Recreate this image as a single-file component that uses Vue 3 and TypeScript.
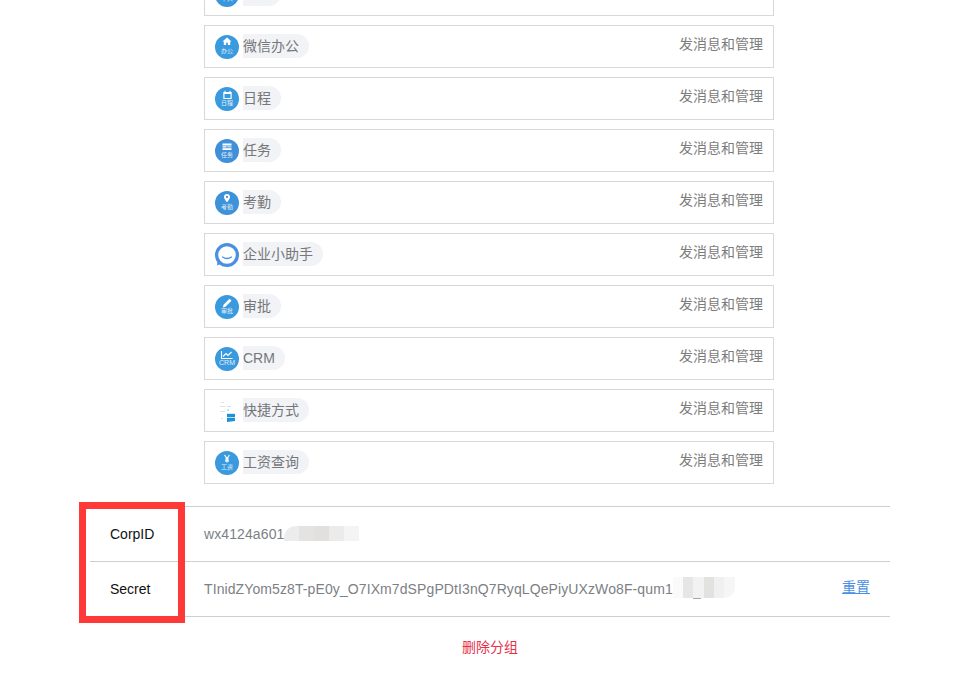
<script setup lang="ts">
interface Row { name: string; perm: string; icon: string; label: string; color: string; width: number }
const PERM = '发消息和管理'
const rows: Row[] = [
  { name: '', perm: '', icon: 'doc', label: '个人', color: '#3a96dc', width: 38 },
  { name: '微信办公', perm: PERM, icon: 'home', label: '办公', color: '#3a9ade', width: 66 },
  { name: '日程', perm: PERM, icon: 'cal', label: '日程', color: '#3a9ade', width: 38 },
  { name: '任务', perm: PERM, icon: 'task', label: '任务', color: '#4090d8', width: 38 },
  { name: '考勤', perm: PERM, icon: 'pin', label: '考勤', color: '#3d92d8', width: 38 },
  { name: '企业小助手', perm: PERM, icon: 'chat', label: '', color: '#4a90e2', width: 80 },
  { name: '审批', perm: PERM, icon: 'pen', label: '审批', color: '#3a9ade', width: 38 },
  { name: 'CRM', perm: PERM, icon: 'crm', label: 'CRM', color: '#3a9ade', width: 42 },
  { name: '快捷方式', perm: PERM, icon: 'shortcut', label: '', color: '', width: 66 },
  { name: '工资查询', perm: PERM, icon: 'yen', label: '工资', color: '#3a9ade', width: 66 },
]
const corpPatches = ['#ececec', '#e4e3e2', '#e1e0df', '#ebebeb', '#f4f4f4']
const secretPatches = ['#fafafa', '#e6e6e6', '#f2f2f2', '#e2e2e1', '#f0f0f0', '#f6f6f6']
</script>

<template>
  <div class="page">
    <div class="list">
      <div v-for="row in rows" :key="row.icon" class="row">
        <div class="app">
          <svg class="icon" viewBox="0 0 24 24" width="24" height="24">
            <template v-if="row.icon === 'chat'">
              <circle cx="12" cy="12" r="10.4" fill="#fff" stroke="#4a90e2" stroke-width="3.2" />
              <path d="M2.500 18l-.5 4.500 5-2z" fill="#4a90e2" />
              <path d="M7.500 14q4.500 3 9 0" fill="none" stroke="#4a90e2" stroke-width="1.300" stroke-linecap="round" />
            </template>
            <template v-else-if="row.icon === 'shortcut'">
              <g fill="#dfe3e6">
                <rect x="6" y="3" width="3" height="1" />
                <rect x="5" y="7" width="5" height="1" />
                <rect x="5" y="12" width="5" height="1" />
                <rect x="6" y="19" width="2" height="1" />
              </g>
              <g fill="#c2e2f5">
                <rect x="12" y="7" width="4" height="1" />
                <rect x="12" y="10" width="2" height="2" />
              </g>
              <path d="M12 14.800h8v3.500h-8z" fill="#1d93d6" />
              <path d="M12 19h8v3l-8 1z" fill="#1d93d6" />
            </template>
            <template v-else>
              <circle cx="12" cy="12" r="12" :fill="row.color" />
              <path v-if="row.icon === 'home'" d="M12 2.500l4.500 3.900h-1.300v3.600h-2.300V7.800h-1.800V10H8.800V6.400H7.500z" fill="#fff" />
              <path v-else-if="row.icon === 'cal'" fill-rule="evenodd" d="M8.500 5h1V3.800h1V5h4V3.800h1V5h1.200v7H8.300V5zM9.500 7v4h6V7z" fill="#fff" />
              <g v-else-if="row.icon === 'task'" fill="#fff">
                <rect x="7.500" y="4.500" width="9" height="2" />
                <rect x="7.500" y="7.200" width="4" height="1.300" />
                <rect x="12.300" y="7.200" width="4.200" height="1.300" opacity=".7" />
                <rect x="7.500" y="9.200" width="9" height="1.800" />
              </g>
              <path v-else-if="row.icon === 'pin'" fill-rule="evenodd" d="M12 3c-1.800 0-3 1.300-3 2.900 0 1.900 3 5.400 3 5.400s3-3.500 3-5.400C15 4.300 13.800 3 12 3zm0 1.800a1.100 1.100 0 110 2.200 1.100 1.100 0 010-2.200z" fill="#fff" />
              <path v-else-if="row.icon === 'pen'" d="M14.500 3.800l2 2-6 6-2.700.7.700-2.700z" fill="#fff" />
              <path v-else-if="row.icon === 'crm'" d="M6.500 4v7.500h11M8 9.500l3-3 2 2 3.500-3.500" fill="none" stroke="#fff" stroke-width="1.100" />
              <path v-else-if="row.icon === 'yen'" d="M9.500 4l2.500 3.500L14.500 4M12 7.500V11.500M10 8h4M10 9.800h4" fill="none" stroke="#fff" stroke-width="1.200" />
              <path v-else d="M8 4h8v7H8z" fill="#fff" />
              <text class="label" :class="{ latin: row.icon === 'crm' }" x="12" y="18" text-anchor="middle">{{ row.label }}</text>
            </template>
          </svg>
          <span class="pill" :style="{ width: row.width + 'px' }">{{ row.name }}</span>
        </div>
        <span class="perm">{{ row.perm }}</span>
      </div>
    </div>

    <div class="table">
      <div class="tr">
        <div class="key">CorpID</div>
        <div class="value">
          <span class="secret-text">wx4124a601</span>
          <span class="mask corp">
            <i v-for="(c, i) in corpPatches" :key="i" :style="{ background: c }"></i>
          </span>
        </div>
      </div>
      <div class="tr">
        <div class="key">Secret</div>
        <div class="value">
          <span class="secret-text">TInidZYom5z8T-pE0y_O7IXm7dSPgPDtI3nQ7RyqLQePiyUXzWo8F-qum1</span>
          <span class="mask secret">
            <i v-for="(c, i) in secretPatches" :key="i" :style="{ background: c }"></i>
          </span>
          <a class="reset">重置</a>
        </div>
      </div>
      <div class="highlight"></div>
    </div>

    <div class="delete">删除分组</div>
  </div>
</template>

<style scoped>
.page {
  position: relative;
  width: 964px;
  height: 694px;
  overflow: hidden;
  background: #fff;
  font-family: "Liberation Sans", "Noto Sans CJK SC", sans-serif;
  font-size: 14px;
}
.list {
  display: flex;
  flex-direction: column;
  gap: 9px;
  width: 570px;
  margin: -27px 0 0 204px;
}
.row {
  box-sizing: border-box;
  height: 43px;
  border: 1px solid #d8d8d8;
  display: flex;
  justify-content: space-between;
  padding: 9px 10px 0;
}
.app {
  display: flex;
  align-items: flex-start;
  gap: 4px;
}
.icon {
  display: block;
  flex: none;
}
.label {
  font-size: 6px;
  fill: #fff;
  opacity: 0.85;
}
.label.latin {
  font-size: 7px;
}
.pill {
  box-sizing: border-box;
  height: 24px;
  line-height: 24px;
  margin-top: -1px;
  background: #f1f3f7;
  border-radius: 0 12px 12px 0;
  color: #777;
  white-space: nowrap;
}
.perm {
  color: #7d7d7d;
  line-height: 18px;
}
.table {
  position: relative;
  width: 800px;
  margin: 22px 0 0 90px;
  border-top: 1px solid #cfcfcf;
}
.tr {
  box-sizing: border-box;
  height: 55px;
  border-bottom: 1px solid #cfcfcf;
  display: flex;
  align-items: center;
}
.key {
  width: 114px;
  padding-left: 20px;
  box-sizing: border-box;
  color: #111;
}
.value {
  flex: 1;
  display: flex;
  align-items: center;
  color: #7c7f85;
  white-space: nowrap;
}
.secret-text {
  letter-spacing: 0.1px;
}
.mask {
  display: flex;
  height: 15px;
}
.mask i {
  display: block;
}
.mask.corp {
  width: 75px;
  margin-bottom: 2px;
}
.mask.corp i {
  flex: 1;
}
.mask.corp i:first-child {
  border-radius: 12px 0 0 0;
}
.mask.secret {
  position: relative;
  width: 62px;
  height: 21px;
  margin-bottom: 3px;
}
.mask.secret::after {
  content: "";
  position: absolute;
  left: 20px;
  bottom: -1px;
  width: 8px;
  height: 1px;
  background: #a8a8a8;
}
.mask.secret i {
  flex: 1;
}
.mask.secret i:last-child {
  border-radius: 0 0 10px 0;
}
.reset {
  margin: 0 20px 6px auto;
  color: #4a90e2;
  text-decoration: underline;
}
.highlight {
  position: absolute;
  left: -11px;
  top: -5px;
  box-sizing: border-box;
  width: 106px;
  height: 121px;
  border: 7px solid #ff3838;
}
.delete {
  margin: 19px 0 0;
  text-align: center;
  width: 980px;
  color: #e8304a;
}
</style>
